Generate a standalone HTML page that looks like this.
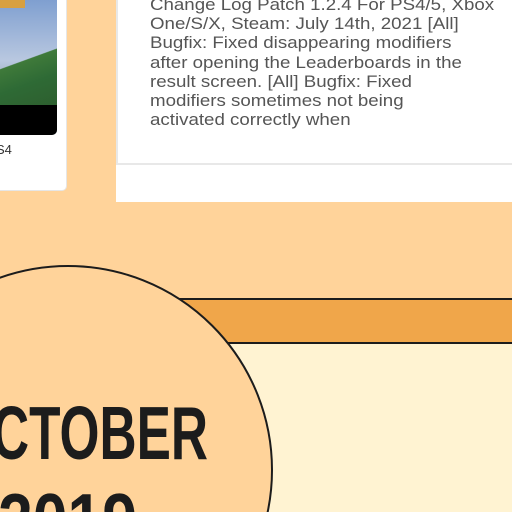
<!DOCTYPE html>
<html><head><style>
html,body{margin:0;padding:0;width:512px;height:512px;overflow:hidden;background:#FFD39A;font-family:"Liberation Sans",sans-serif;}
.abs{position:absolute;}
</style></head><body>
<div class="abs" style="left:-10px;top:-10px;width:77px;height:201px;background:#fff;border:1px solid #e6e6e6;border-radius:5px;box-sizing:border-box;"></div>
<div class="abs" style="left:-5px;top:0;width:62px;height:135px;border-radius:0 0 5px 0;overflow:hidden;background:linear-gradient(#7f9fd0,#b9c8e0 45%,#9fb0c0 60%);">
  <div class="abs" style="left:0;top:45px;width:70px;height:60px;background:linear-gradient(160deg,transparent 30%,#3f7a3a 31%,#2e6a35 60%,#2d5e2e);"></div>
  <div class="abs" style="left:0;top:105px;width:70px;height:30px;background:#000;"></div>
  <div class="abs" style="left:0;top:0;width:30px;height:8px;background:#d8a040;"></div>
</div>
<div class="abs" style="left:-4px;top:142px;font-size:13px;color:#333;">S4</div>

<div class="abs" style="left:116px;top:0;width:396px;height:202px;background:#fff;"></div>
<div class="abs" style="left:116px;top:0;width:396px;height:165px;border-left:2px solid #e8e8e8;border-bottom:2px solid #e8e8e8;box-sizing:border-box;"></div>
<div class="abs" style="left:150px;top:-5px;font-size:17px;line-height:19.2px;color:#555;white-space:nowrap;transform:scaleX(1.1);transform-origin:0 0;">Change Log Patch 1.2.4 For PS4/5, Xbox<br>One/S/X, Steam: July 14th, 2021 [All]<br>Bugfix: Fixed disappearing modifiers<br>after opening the Leaderboards in the<br>result screen. [All] Bugfix: Fixed<br>modifiers sometimes not being<br>activated correctly when</div>

<svg class="abs" style="left:0;top:0;overflow:hidden" width="512" height="512">
  <rect x="100" y="299" width="420" height="44" fill="#F0A64A" stroke="#1c1c1c" stroke-width="2"/>
  <rect x="100" y="344" width="420" height="180" fill="#FFF3D2"/>
  <circle cx="68" cy="470" r="204" fill="#FFD39A" stroke="#1c1c1c" stroke-width="2"/>
  <text x="-8" y="459" font-family="Liberation Sans" font-weight="bold" font-size="75" fill="#1c1c1c" textLength="216" lengthAdjust="spacingAndGlyphs">CTOBER</text>
  <text x="-2" y="546" font-family="Liberation Sans" font-weight="bold" font-size="75" fill="#1c1c1c" textLength="139" lengthAdjust="spacingAndGlyphs">2019</text>
</svg>
</body></html>
